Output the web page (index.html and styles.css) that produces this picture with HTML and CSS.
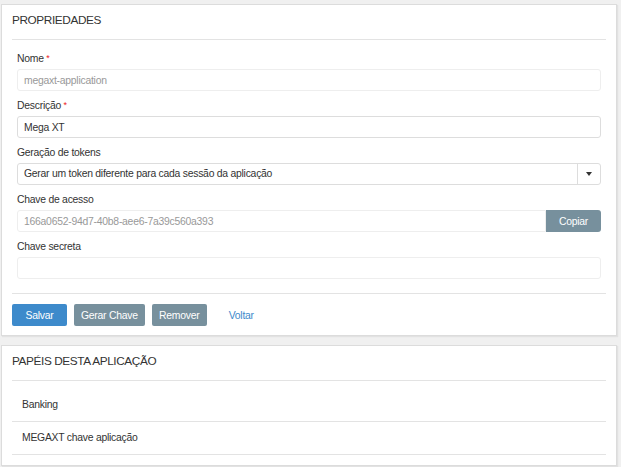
FILE: index.html
```html
<!DOCTYPE html>
<html>
<head>
    <title>Aplicação</title>
    <link rel="stylesheet" href="styles.css">
</head>
<body>
    <div class="panel">
        <div class="panel-heading">PROPRIEDADES</div>
        <form class="panel-body" id="appForm">
            <div class="form-group">
                <label>Nome <span class="req">*</span></label>
                <input type="text" class="readonly" value="megaxt-application" readonly>
            </div>
            <div class="form-group">
                <label>Descrição <span class="req">*</span></label>
                <input type="text" value="Mega XT">
            </div>
            <div class="form-group">
                <label>Geração de tokens</label>
                <div class="select">
                    <span class="select-value">Gerar um token diferente para cada sessão da aplicação</span>
                    <span class="select-caret"></span>
                </div>
            </div>
            <div class="form-group">
                <label>Chave de acesso</label>
                <div class="input-group">
                    <input type="text" class="readonly" value="166a0652-94d7-40b8-aee6-7a39c560a393" readonly>
                    <button type="button" class="btn btn-gray btn-addon">Copiar</button>
                </div>
            </div>
            <div class="form-group">
                <label>Chave secreta</label>
                <input type="text" class="readonly" readonly>
            </div>
        </form>
        <div class="panel-footer">
            <button type="submit" class="btn btn-blue">Salvar</button>
            <button type="button" class="btn btn-gray">Gerar Chave</button>
            <button type="button" class="btn btn-gray">Remover</button>
            <a href="#" class="btn-link">Voltar</a>
        </div>
    </div>

    <div class="panel">
        <div class="panel-heading">PAPÉIS DESTA APLICAÇÃO</div>
        <ul class="role-list">
            <li>Banking</li>
            <li>MEGAXT chave aplicação</li>
        </ul>
    </div>
</body>
</html>
```

FILE: styles.css
```css
body { margin: 0; padding: 4px 4px 0 1px; background: #f0f0f0; font-family: "Liberation Sans", Arial, sans-serif; font-size: 10.4px; letter-spacing: -0.25px; color: #333; }
.panel { background: #fff; border: 1px solid #dcdcdc; box-shadow: 1px 1px 1px #e2e2e2; padding: 0 10px; margin-bottom: 9px; }
.panel-heading { font-size: 11.8px; letter-spacing: -0.4px; line-height: 15px; padding: 8px 0 11px; border-bottom: 1px solid #e3e3e3; }
.panel-body { padding: 11px 5px 7px; }
.form-group { margin-bottom: 7px; }
label { display: block; line-height: 15px; margin-bottom: 3px; }
.req { color: #e22; font-size: 9px; vertical-align: 1px; }
input { display: block; width: 100%; height: 22px; box-sizing: border-box; border: 1px solid #ddd; border-radius: 3px; padding: 0 6px; font: inherit; letter-spacing: inherit; color: #333; }
input.readonly { border-color: #eee; color: #999; background: #fff; }
.select { display: flex; height: 22px; box-sizing: border-box; border: 1px solid #ddd; border-radius: 3px; align-items: stretch; }
.select-value { flex: 1; padding: 0 6px; line-height: 20px; }
.select-caret { width: 22px; border-left: 1px solid #ddd; display: flex; align-items: center; justify-content: center; }
.select-caret::after { content: ""; border-top: 4px solid #333; border-left: 3px solid transparent; border-right: 3px solid transparent; }
.input-group { display: flex; }
.input-group input { flex: 1; border-radius: 3px 0 0 3px; }
.btn { height: 22px; min-width: 55px; padding: 0 7px; border: none; border-radius: 2px; color: #fff; font: inherit; letter-spacing: inherit; cursor: pointer; }
.btn-blue { background: #3d8acb; }
.btn-gray { background: #77909d; }
.btn-addon { width: 54px; padding: 0; border-radius: 0 3px 3px 0; }
.btn-link { color: #3d8acb; text-decoration: none; margin-left: 15px; }
.panel-footer { border-top: 1px solid #e3e3e3; padding: 10px 0 9px; display: flex; align-items: center; gap: 7px; }
.role-list { list-style: none; margin: 0; padding: 8px 0 10px; }
.role-list li { line-height: 32px; padding-left: 10px; border-bottom: 1px solid #e3e3e3; }
```
